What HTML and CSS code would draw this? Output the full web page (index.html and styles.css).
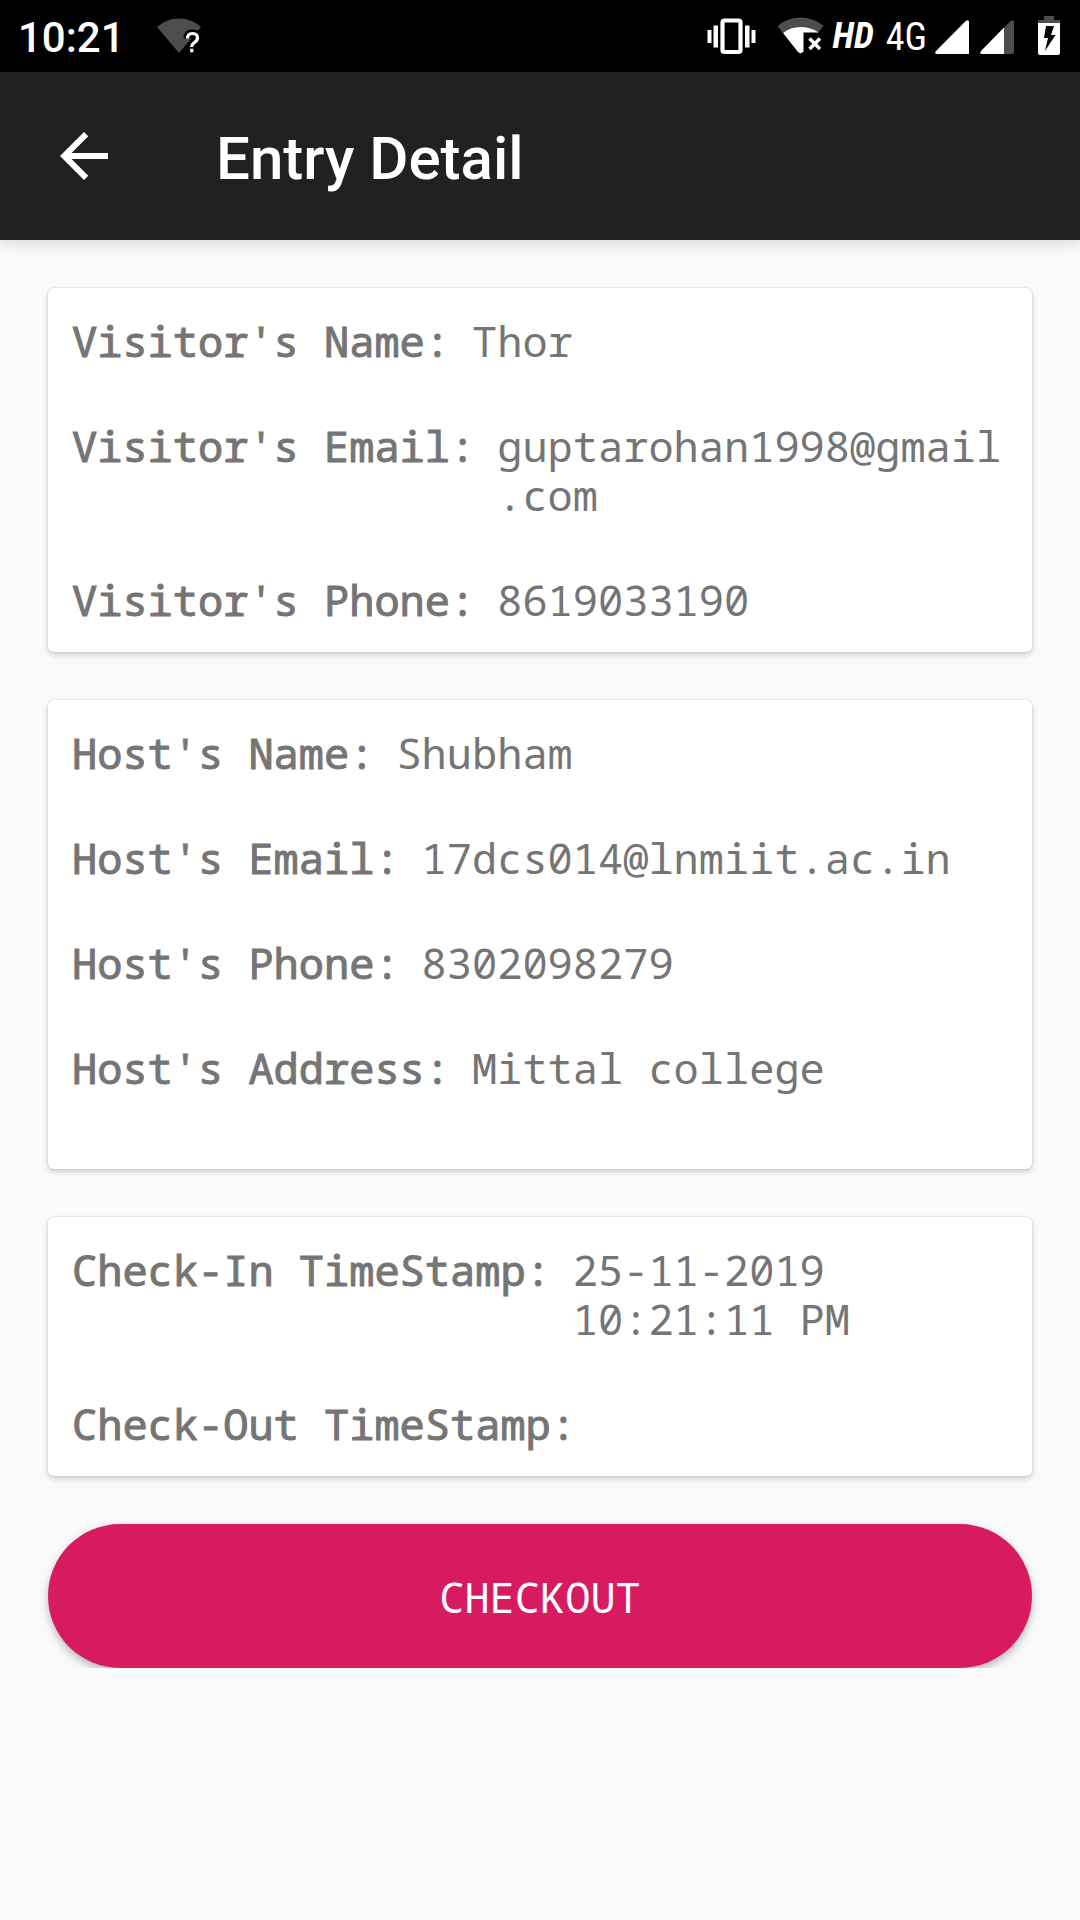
FILE: index.html
```html
<!DOCTYPE html>
<html lang="en">
<head>
  <meta charset="utf-8">
  <meta name="viewport" content="width=device-width, initial-scale=1">
  <title>Entry Detail</title>
  <link rel="stylesheet" href="styles.css">
</head>
<body>
  <div class="status-bar">
    <div class="status-group status-left">
      <span class="clock">10:21</span>
      <svg class="icon" width="46" height="42" viewBox="156 15 46 42" aria-hidden="true">
        <path fill="#4d4d4d" d="M157 27Q166 18.500 179 18.500T201 27L179 53Z"/>
        <path fill="none" stroke="#000" stroke-width="8" d="M187.500 38.500Q187.500 33.500 192.500 33.500T197.500 38Q197.500 40.500 194.500 42.500T191.800 47M191.800 48.500V52"/>
        <path fill="none" stroke="#fff" stroke-width="3.200" d="M187.500 38.500Q187.500 33.500 192.500 33.500T197.500 38Q197.500 40.500 194.500 42.500T191.800 47M191.800 48.800V52.200"/>
      </svg>
    </div>
    <div class="status-group status-right">
      <svg class="icon vibrate" width="50" height="42" viewBox="705 15 50 42" aria-hidden="true">
        <rect x="720.500" y="20.500" width="18" height="31.500" rx="2" fill="none" stroke="#fff" stroke-width="4.200"/>
        <path fill="#fff" d="M705.500 30h4v13h-4zM711.500 25.500h4.500v22h-4.500zM743 25.500h4.500v22H743zM749.500 30h4v13h-4z"/>
      </svg>
      <svg class="icon wifi" width="48" height="42" viewBox="774 15 48 42" aria-hidden="true">
        <path fill="#4d4d4d" d="M774.500 26Q784 17.500 797.500 17.500T820.500 26L815 33Q808 27 797.500 27T780 33Z"/>
        <path fill="#fff" d="M780 33Q787 27 797.500 27T815.500 32.500H800.500V51.500Q797.500 54.500 795 52Z"/>
        <path fill="none" stroke="#fff" stroke-width="3.500" d="M806.500 38.500L817 49M817 38.500L806.500 49"/>
      </svg>
      <span class="badge-hd">HD</span>
      <span class="network">4G</span>
      <svg class="icon signal" width="34" height="42" viewBox="935 15 34 42" aria-hidden="true">
        <path fill="#fff" d="M936 51L966 20.800Q969 19 969 22V54H937Q934 54 936 51Z"/>
      </svg>
      <svg class="icon signal-weak" width="34" height="42" viewBox="980 15 34 42" aria-hidden="true">
        <path fill="#4d4d4d" d="M1004 27.500L1011 20.800Q1014 19 1014 22V52Q1014 54 1012 54H1004Z"/>
        <path fill="#fff" d="M981 51L1004 27.500V54H982Q979 54 981 51Z"/>
      </svg>
      <svg class="icon battery" width="22" height="42" viewBox="1038 15 22 42" aria-hidden="true">
        <path fill="#4d4d4d" d="M1044 16h10v4h6v3h-22v-3h6z"/>
        <path fill="#fff" d="M1038 23h22v30q0 2-2 2h-18q-2 0-2-2z"/>
        <path fill="#000" d="M1046 26h8l-3 9h4.500l-10.500 16 3-13h-4z"/>
      </svg>
    </div>
  </div>

  <header class="app-bar">
    <a class="back" href="#" aria-label="Back">
      <svg width="72" height="72" viewBox="0 0 24 24" aria-hidden="true">
        <path fill="#fff" d="M20 11H7.830l5.590-5.590L12 4l-8 8 8 8 1.410-1.410L7.830 13H20v-2z"/>
      </svg>
    </a>
    <h1 class="title">Entry Detail</h1>
  </header>

  <main class="content">
    <dl class="card">
      <div class="row"><dt>Visitor's Name:</dt><dd>Thor</dd></div>
      <div class="row"><dt>Visitor's Email:</dt><dd>guptarohan1998@gmail.com</dd></div>
      <div class="row"><dt>Visitor's Phone:</dt><dd>8619033190</dd></div>
    </dl>
    <dl class="card">
      <div class="row"><dt>Host's Name:</dt><dd>Shubham</dd></div>
      <div class="row"><dt>Host's Email:</dt><dd>17dcs014@lnmiit.ac.in</dd></div>
      <div class="row"><dt>Host's Phone:</dt><dd>8302098279</dd></div>
      <div class="row address"><dt>Host's Address:</dt><dd>Mittal college</dd></div>
    </dl>
    <dl class="card">
      <div class="row"><dt>Check-In TimeStamp:</dt><dd>25-11-2019 10:21:11 PM</dd></div>
      <div class="row"><dt>Check-Out TimeStamp:</dt><dd></dd></div>
    </dl>
    <div class="actions">
      <button class="checkout" type="button">CHECKOUT</button>
    </div>
  </main>
</body>
</html>
```
FILE: styles.css
```css
* {
  box-sizing: border-box;
}

body {
  margin: 0;
  min-height: 100vh;
  background: #fafafa;
  color: #757575;
  font-family: Roboto, sans-serif;
}

.status-bar {
  display: flex;
  justify-content: space-between;
  align-items: center;
  height: 72px;
  padding: 0 20px 0 18px;
  background: #000;
  color: #fff;
}

.status-group {
  display: flex;
  align-items: center;
}

.status-left {
  gap: 31px;
}

.icon {
  display: block;
  flex: none;
}

.clock {
  padding-top: 4px;
  font-size: 42px;
  font-weight: 500;
  line-height: 48px;
}

.wifi {
  margin-left: 20px;
}

.badge-hd,
.network {
  font-family: "Roboto Condensed", "Liberation Sans Narrow", Roboto, sans-serif;
  font-size: 36px;
  line-height: 42px;
}

.badge-hd {
  margin-left: 8px;
  font-weight: 700;
  font-style: italic;
}

.network {
  margin: 0 8px 0 12px;
  padding-top: 2px;
  font-size: 38px;
  font-weight: 400;
}

.signal-weak {
  margin: 0 24px 0 11px;
}

.app-bar {
  display: flex;
  align-items: center;
  gap: 96px;
  height: 168px;
  padding: 0 48px;
  background: #212121;
  box-shadow: 0 2px 14px rgba(0, 0, 0, 0.16);
}

.back svg {
  display: block;
}

.title {
  margin: 0;
  padding-top: 6px;
  color: #fff;
  font-size: 60px;
  font-weight: 500;
  line-height: 72px;
}

.content {
  display: flex;
  flex-direction: column;
  gap: 48px;
  padding: 48px;
}

.card,
.checkout {
  font-family: "Droid Sans Mono", "Noto Sans Mono", "DejaVu Sans Mono", monospace;
  font-size: 42px;
  line-height: 49px;
}

.card {
  display: flex;
  flex-direction: column;
  gap: 56px;
  margin: 0;
  padding: 28px 24px;
  border-radius: 6px;
  background: #fff;
  box-shadow: 0 0 2px rgba(0, 0, 0, 0.2), 0 3px 6px rgba(0, 0, 0, 0.16);
}

.row {
  display: flex;
  gap: 22px;
}

.row dt {
  flex: none;
  -webkit-text-stroke: 1px currentColor;
}

.row dd {
  flex: 1;
  min-width: 0;
  margin: 0;
  overflow-wrap: anywhere;
}

.address {
  min-height: 98px;
}

/* The button's shadow stops at the bottom edge of its container. */
.actions {
  clip-path: inset(-12px -24px 0);
}

.checkout {
  display: block;
  width: 100%;
  height: 144px;
  padding: 0;
  border: 0;
  border-radius: 72px;
  background: #d81b60;
  color: #fff;
  box-shadow: 0 4px 8px rgba(0, 0, 0, 0.26);
}
```
